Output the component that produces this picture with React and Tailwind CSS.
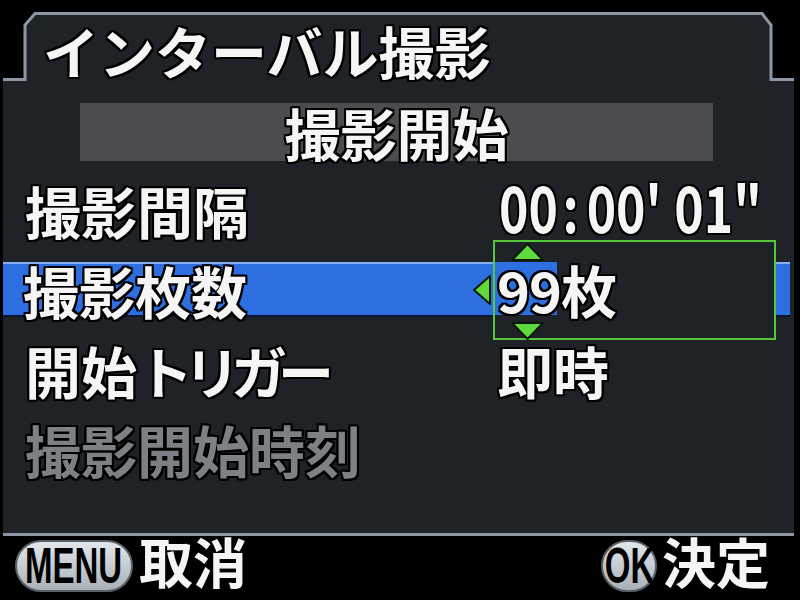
import React from "react";

const OUT =
  "[text-shadow:-2px_-2px_0_#000,2px_-2px_0_#000,-2px_2px_0_#000,2px_2px_0_#000,0_2px_0_#000,0_-2px_0_#000,2px_0_0_#000,-2px_0_0_#000]";

function Tri({ dir, className }) {
  const pts =
    dir === "up"
      ? "2,17 17.5,1 33,17"
      : dir === "down"
      ? "2,1 17.5,17 33,1"
      : "17,1 1,15 17,29";
  const vb = dir === "left" ? "0 0 18 30" : "0 0 35 18";
  return (
    <svg viewBox={vb} className={className}>
      <polygon points={pts} fill="#5fd93f" stroke="#0b1a08" strokeWidth="2" strokeLinejoin="round" />
    </svg>
  );
}

export default function App() {
  return (
    <div className="w-[800px] h-[600px] bg-black overflow-hidden flex flex-col font-['Noto_Sans_CJK_JP','Noto_Sans',sans-serif] font-bold text-[#f5f5f5]">
      <div className="h-[12px] shrink-0" />
      {/* tab row */}
      <div className="ml-[3px] w-[791px] h-[68px] shrink-0 relative">
        <svg className="absolute inset-0 overflow-visible" width="791" height="68" viewBox="0 0 791 68">
          <path d="M22,70 L22,13 L32,1.5 L759,1.5 L768,13 L768,70 Z" fill="#1f2226" />
          <rect x="0" y="67" width="791" height="3" fill="#1f2226" />
          <path
            d="M0,67.5 L22,67.5 L22,13 L32,1.5 L759,1.5 L768,13 L768,67.5 L791,67.5"
            fill="none"
            stroke="#8c97a3"
            strokeWidth="3"
          />
        </svg>
        <div className={`relative pl-[40px] pt-[10px] text-[56px] leading-[56px] ${OUT}`}>
          インターバル撮影
        </div>
      </div>
      {/* body */}
      <div className="ml-[3px] w-[791px] h-[456px] shrink-0 bg-[#1f2226] border-b-[3px] border-[#8c97a3] flex flex-col">
        <div className="mt-[23px] ml-[77px] w-[633px] h-[58px] bg-[#4a4c50] flex items-center justify-center">
          <span className={`text-[56px] leading-[56px] ${OUT}`}>撮影開始</span>
        </div>
        <div className="h-[11px]" />
        {/* row 1 */}
        <div className="h-[79px] flex items-center">
          <div className={`w-[494px] pl-[22px] mb-[3px] text-[56px] leading-[56px] ${OUT}`}>撮影間隔</div>
          <div className="w-[260px] mb-[14px] ml-[2px] overflow-visible">
            <div className={`flex origin-left scale-x-[0.78] text-[64px] leading-[56px] ${OUT}`}>
              <span>00</span>
              <span className="ml-[6px]">:</span>
              <span className="ml-[10px]">00&apos;</span>
              <span className="ml-[16px]">01&quot;</span>
            </div>
          </div>
        </div>
        {/* row 2 */}
        <div className="h-[79px] flex items-center">
          <div className="w-[787px] h-[53px] mb-[4px] bg-[#2d6fe0] border-t-[2px] border-[#86aef0] shadow-[0_2px_0_#081633] flex items-center">
            <div className="w-[492px] pl-[20px] flex items-center justify-between">
              <span className={`text-[56px] leading-[56px] ${OUT}`}>撮影枚数</span>
              <Tri dir="left" className="w-[18px] h-[30px] mr-[4px]" />
            </div>
            <div className="relative h-full">
              <div className="absolute left-[-2px] top-[-24px] w-[283px] h-[100px] bg-[#1f2226] border-[2px] border-[#56c83c]">
                <div className="absolute left-[0px] top-[20px] w-[62px] h-[53px] bg-[#2d6fe0]" />
                <Tri dir="up" className="absolute left-[15px] top-[1px] w-[35px] h-[18px]" />
                <Tri dir="down" className="absolute left-[15px] top-[80px] w-[35px] h-[18px]" />
                <div className={`absolute left-[2px] top-[19px] flex items-end text-[56px] leading-[56px] ${OUT}`}>
                  <span className="tracking-[-1px]">99</span>
                  <span>枚</span>
                </div>
              </div>
            </div>
          </div>
        </div>
        {/* row 3 */}
        <div className="h-[79px] flex items-center">
          <div className={`w-[494px] pl-[22px] text-[56px] leading-[56px] ${OUT}`}>
            開始<span className="tracking-[-9px]">トリガー</span>
          </div>
          <div className={`text-[56px] leading-[56px] ${OUT}`}>即時</div>
        </div>
        {/* row 4 */}
        <div className="h-[79px] flex items-center">
          <div className={`w-[494px] pl-[22px] text-[56px] leading-[56px] text-[#7d8084] ${OUT}`}>撮影開始時刻</div>
        </div>
      </div>
      {/* footer */}
      <div className="h-[64px] flex items-start justify-between pl-[15px] pr-[30px]">
        <div className="flex items-start">
          <div className="mt-[4px] w-[118px] h-[52px] rounded-full bg-gradient-to-b from-[#e2e7eb] to-[#a9b1b8] border-[2px] border-[#5a6066] flex items-center justify-center overflow-visible">
            <span className="inline-block scale-x-[0.66] font-['Liberation_Sans',sans-serif] font-bold text-[50px] leading-[46px] text-black">MENU</span>
          </div>
          <span className="ml-[6px] -mt-[1px] text-[54px] leading-[52px]">取消</span>
        </div>
        <div className="flex items-start">
          <div className="mt-[4px] w-[56px] h-[52px] rounded-full bg-gradient-to-b from-[#e2e7eb] to-[#a9b1b8] border-[2px] border-[#5a6066] flex items-center justify-center">
            <span className="inline-block scale-x-[0.66] font-['Liberation_Sans',sans-serif] font-bold text-[50px] leading-[46px] text-black">OK</span>
          </div>
          <span className="ml-[5px] -mt-[1px] text-[54px] leading-[52px]">決定</span>
        </div>
      </div>
    </div>
  );
}
